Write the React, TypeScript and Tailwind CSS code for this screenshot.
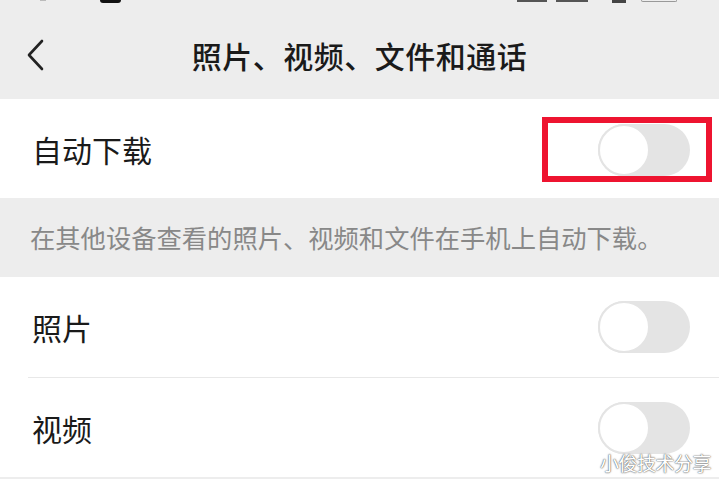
import React from "react";

const font = { fontFamily: '"Noto Sans CJK SC", "Noto Sans", sans-serif' };

function Toggle() {
  return (
    <div className="relative w-[92px] h-[52px] rounded-full bg-[#e4e4e4]">
      <div className="absolute left-0 top-0 w-[52px] h-[52px] rounded-full bg-white border-2 border-[#e4e4e4]" />
    </div>
  );
}

export default function App() {
  return (
    <div className="relative w-[719px] h-[479px] overflow-hidden bg-[#ededed]" style={font}>
      {/* header */}
      <div className="relative h-[99px] flex items-center justify-center pt-[11px] bg-[#ededed]">
        {/* status bar remnants */}
        <div className="absolute left-[40px] top-0 w-[6px] h-[1px] bg-[#bbb]" />
        <div className="absolute left-[100px] top-0 w-[21px] h-[3px] rounded-b-[3px] bg-[#111]" />
        <div className="absolute left-[517px] top-0 w-[30px] h-[2px] bg-[#555]" />
        <div className="absolute left-[556px] top-0 w-[32px] h-[2px] bg-[#555]" />
        <div className="absolute left-[612px] top-0 w-[14px] h-[3px] bg-[#444]" />
        <div className="absolute left-[641px] top-0 w-[36px] h-[2px] rounded-b-[2px] border-b border-x border-[#999]" />
        <svg className="absolute left-[24px] top-[38px]" width="24" height="34" viewBox="0 0 24 34">
          <path d="M18 3 L5 17 L18 31" fill="none" stroke="#222" strokeWidth="2.6" strokeLinecap="round" strokeLinejoin="round" />
        </svg>
        <div className="text-[30px] leading-none font-medium text-[#1a1a1a] tracking-[0.5px]">照片、视频、文件和通话</div>
      </div>

      {/* auto download */}
      <div className="h-[99px] bg-white flex items-center justify-between pl-[32px] pr-[7px]">
        <span className="text-[30px] leading-none text-[#1a1a1a]">自动下载</span>
        <div className="border-[6px] border-[#ee1430] pl-[50px] pr-[16px] pt-[1px] pb-0 mt-[1px]">
          <Toggle />
        </div>
      </div>

      {/* description */}
      <div className="h-[79px] flex items-center pl-[30px] pt-[1px]">
        <span className="text-[25.3px] leading-none text-[#888]">在其他设备查看的照片、视频和文件在手机上自动下载。</span>
      </div>

      {/* photos */}
      <div className="h-[100px] bg-white flex items-center justify-between pl-[32px] pr-[29px]">
        <span className="text-[30px] leading-none text-[#1a1a1a]">照片</span>
        <Toggle />
      </div>
      <div className="bg-white pl-[28px]">
        <div className="h-[1px] bg-[#e8e8e8]" />
      </div>
      {/* videos */}
      <div className="h-[99px] bg-white flex items-center justify-between pl-[32px] pr-[29px]">
        <span className="text-[30px] leading-none text-[#1a1a1a]">视频</span>
        <Toggle />
      </div>

      <div
        className="absolute left-[600px] top-[453px] text-[19px] leading-none text-white tracking-[-0.5px]"
        style={{ textShadow: "0 0 1px #444, 0 0 2px #777" }}
      >
        小俊技术分享
      </div>
    </div>
  );
}
